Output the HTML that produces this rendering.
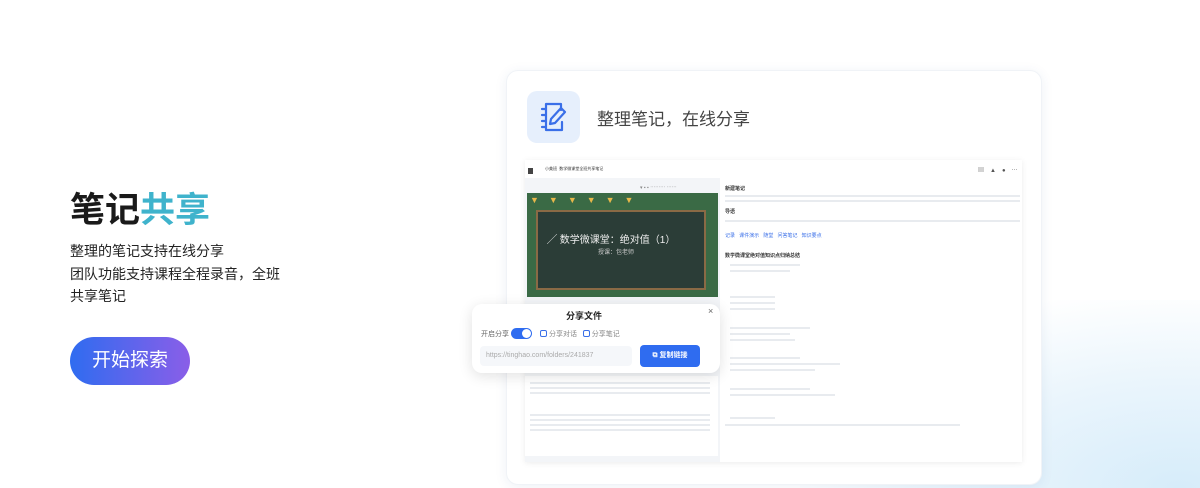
<!DOCTYPE html>
<html><head><meta charset="utf-8"><style>
*{margin:0;padding:0;box-sizing:border-box}
html,body{width:1200px;height:488px;overflow:hidden}
body{background:#fff;font-family:"Liberation Sans","Noto Sans CJK SC",sans-serif;position:relative}
.bg{position:absolute;left:800px;top:300px;width:400px;height:188px;background:radial-gradient(ellipse at 95% 100%,#d6ecfa 0%,#eaf5fc 40%,rgba(255,255,255,0) 75%)}
.abs{position:absolute}
h1{position:absolute;left:70px;top:182px;font-size:35px;font-weight:bold;color:#1a1a1a}
h1 span{color:#3fb3cc}
.desc{position:absolute;left:70px;top:240px;font-size:14px;line-height:22.5px;color:#222}
.btn{position:absolute;left:70px;top:337px;width:120px;height:48px;border-radius:24px;background:linear-gradient(90deg,#2f6cf0,#8a5ee8);color:#fff;font-size:19px;text-align:center;line-height:48px}
.card{position:absolute;left:506px;top:70px;width:536px;height:415px;background:#fff;border-radius:12px;box-shadow:0 2px 12px rgba(40,80,140,.08);border:1px solid #f0f3f7}
.ico{position:absolute;left:527px;top:91px;width:53px;height:52px;border-radius:10px;background:#e6effc}
.ct{position:absolute;left:597px;top:105px;font-size:17px;color:#444}
.shot{position:absolute;left:525px;top:160px;width:497px;height:302px;background:#fff;box-shadow:0 1px 6px rgba(0,0,0,.08)}
.lp{position:absolute;left:525px;top:178px;width:195px;height:284px;background:#f3f5f8}
.vid{position:absolute;left:527px;top:193px;width:191px;height:104px;background:#3a6a45}
.board{position:absolute;left:536px;top:210px;width:170px;height:80px;background:#2b3d37;border:2px solid #8a6a45}
.pop{position:absolute;left:472px;top:304px;width:248px;height:69px;background:#fff;border-radius:10px;box-shadow:0 3px 14px rgba(0,0,0,.12)}
.gl{position:absolute;background:#e8ebef;height:1.5px}
</style></head><body>
<div class="bg"></div>
<h1>笔记<span>共享</span></h1>
<div class="desc">整理的笔记支持在线分享<br>团队功能支持课程全程录音，全班<br>共享笔记</div>
<div class="btn">开始探索</div>

<div class="card"></div>
<div class="ico"><svg width="53" height="52" viewBox="0 0 53 52"><g fill="none" stroke="#3a6fe8" stroke-width="2.2" stroke-linecap="round" stroke-linejoin="round"><path d="M19 13h15v6M19 39h16v-8M19 13v26M15 18h4M15 24h4M15 30h4M15 36h4"/><path d="M34 17l4 4-10 11-5 1 1-5z"/></g></svg></div>
<div class="ct">整理笔记，在线分享</div>

<div class="shot"></div>
<div class="abs" style="left:528px;top:168px;width:5px;height:6px;background:#444"></div>
<div class="abs" style="left:545px;top:166px;font-size:4px;color:#333">小美班 &nbsp;数学微课堂全班共享笔记</div>
<div class="abs" style="left:978px;top:165px;font-size:6px;color:#555;letter-spacing:6px">▤▲●⋯</div>
<div class="lp"></div>
<div class="abs" style="left:640px;top:184px;font-size:5px;color:#888">▾ ▪ ▪ ⋯⋯⋯ ⋯⋯</div>
<div class="vid"></div>
<div class="board"></div>
<div class="abs" style="left:530px;top:195px;width:185px;height:10px;font-size:9px;color:#e8b84a;letter-spacing:10px;line-height:10px">▼▼▼▼▼▼</div>
<div class="abs" style="left:547px;top:231px;font-size:10px;color:#eee">╱ 数学微课堂：绝对值（1）</div>
<div class="abs" style="left:598px;top:247px;font-size:6px;color:#ccc">授课：包老师</div>
<div class="abs" style="left:525px;top:376px;width:193px;height:80px;background:#fff"></div>
<div class="gl" style="left:530px;top:382px;width:180px"></div><div class="gl" style="left:530px;top:387px;width:180px"></div><div class="gl" style="left:530px;top:392px;width:180px"></div>
<div class="gl" style="left:530px;top:414px;width:180px"></div><div class="gl" style="left:530px;top:419px;width:180px"></div><div class="gl" style="left:530px;top:424px;width:180px"></div><div class="gl" style="left:530px;top:429px;width:180px"></div>

<div class="abs" style="left:725px;top:185px;font-size:5px;font-weight:bold;color:#333">新建笔记</div>
<div class="gl" style="left:725px;top:195px;width:295px"></div><div class="gl" style="left:725px;top:200px;width:295px"></div>
<div class="abs" style="left:725px;top:208px;font-size:5px;font-weight:bold;color:#333">导语</div>
<div class="gl" style="left:725px;top:220px;width:295px"></div>
<div class="abs" style="left:725px;top:232px;font-size:5px;color:#3a6fe8">记录 &nbsp; 课件演示 &nbsp; 随堂 &nbsp; 问答笔记 &nbsp; 知识要点</div>
<div class="abs" style="left:725px;top:252px;font-size:5px;font-weight:bold;color:#333">数学微课堂绝对值知识点归纳总结</div>
<div class="gl" style="left:730px;top:264px;width:70px"></div><div class="gl" style="left:730px;top:270px;width:60px"></div>
<div class="gl" style="left:730px;top:296px;width:45px"></div><div class="gl" style="left:730px;top:302px;width:45px"></div><div class="gl" style="left:730px;top:308px;width:45px"></div>
<div class="gl" style="left:730px;top:327px;width:80px"></div><div class="gl" style="left:730px;top:333px;width:60px"></div><div class="gl" style="left:730px;top:339px;width:65px"></div>
<div class="gl" style="left:730px;top:357px;width:70px"></div><div class="gl" style="left:730px;top:363px;width:110px"></div><div class="gl" style="left:730px;top:369px;width:85px"></div>
<div class="gl" style="left:730px;top:388px;width:80px"></div><div class="gl" style="left:730px;top:394px;width:105px"></div>
<div class="gl" style="left:730px;top:417px;width:45px"></div><div class="gl" style="left:725px;top:424px;width:235px"></div>

<div class="pop"></div>
<div class="abs" style="left:566px;top:309px;font-size:9px;font-weight:bold;color:#222">分享文件</div>
<div class="abs" style="left:708px;top:306px;font-size:9px;color:#666">×</div>
<div class="abs" style="left:481px;top:329px;font-size:7px;color:#666">开启分享</div>
<div class="abs" style="left:511px;top:328px;width:21px;height:11px;border-radius:6px;background:#2f6cf0"><div style="position:absolute;right:1px;top:1px;width:9px;height:9px;border-radius:50%;background:#fff"></div></div>
<div class="abs" style="left:540px;top:329px;font-size:7px;color:#888"><span style="display:inline-block;width:7px;height:7px;border:1px solid #3a6fe8;border-radius:2px;vertical-align:-1px"></span> 分享对话 &nbsp;&nbsp;<span style="display:inline-block;width:7px;height:7px;border:1px solid #3a6fe8;border-radius:2px;vertical-align:-1px"></span> 分享笔记</div>
<div class="abs" style="left:480px;top:346px;width:152px;height:20px;background:#f5f7fa;border-radius:4px;font-size:7px;color:#aaa;line-height:20px;padding-left:6px">https://tinghao.com/folders/241837</div>
<div class="abs" style="left:640px;top:345px;width:60px;height:22px;background:#2f6cf0;border-radius:4px;font-size:7px;color:#fff;line-height:22px;text-align:center;font-weight:bold">⧉ 复制链接</div>
</body></html>
